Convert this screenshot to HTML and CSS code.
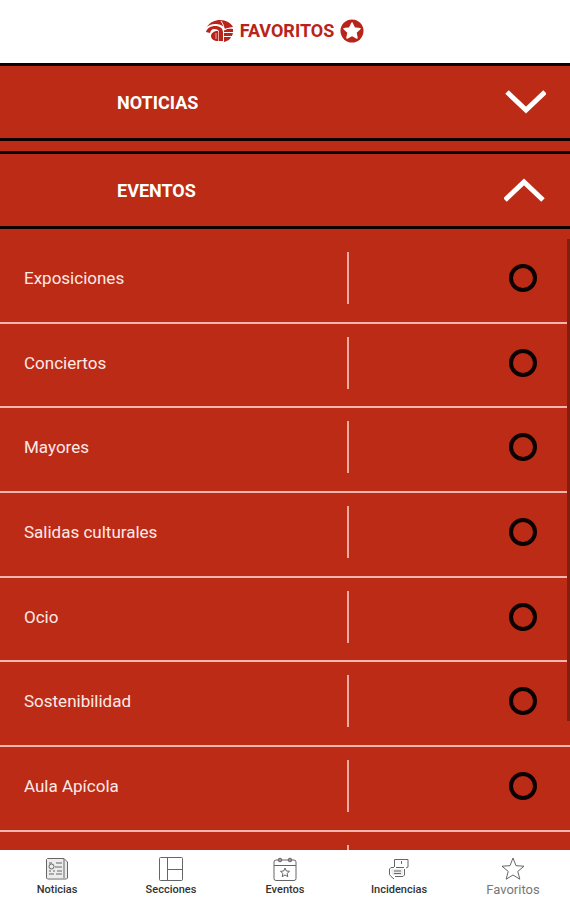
FILE: index.html
```html
<!DOCTYPE html>
<html lang="es">
<head>
<meta charset="utf-8">
<meta name="viewport" content="width=device-width, initial-scale=1">
<title>Favoritos</title>
<link rel="stylesheet" href="styles.css">
</head>
<body>
<header class="topbar">
  <svg class="logo" viewBox="0 0 28 24" aria-hidden="true">
    <path d="M1 8C4 3 9 1 14 1c6 0 11 3 13 7l-8 2C17 6 13 5 9 5 6 5 3 6 1 8z" fill="#b8241a"/>
    <path d="M0 13c1-4 5-6 9-6 5 0 8 2 8 7v8h-4v-9c0-2-2-3-5-3-2 0-3 1-4 4z" fill="#b8241a"/>
    <path d="M12 12v10c-4 0-7-2-7-5s3-5 7-5z" fill="#b8241a"/>
    <path d="M18 11c3-1 6-2 9-1v3h-9zM18 14h9l-1 3h-8zM18 18h7c-1 3-4 4-7 5z" fill="#b8241a"/>
    <path d="M12.500 13v9M10 14v6" fill="none" stroke="#e9aaa4" stroke-width="1"/>
    <path d="M15 2c2 3 3 5 3 9M18 11c3-2 6-2 9-2" fill="none" stroke="#fff" stroke-width="1"/>
  </svg>
  <h1 class="topbar-title">FAVORITOS</h1>
  <svg class="badge" viewBox="0 0 24 24" aria-hidden="true">
    <circle cx="12" cy="12" r="11.5" fill="#b8241a"/>
    <path d="M12 4l2.400 5 5.600.7-4.100 3.800 1.100 5.500-5-2.700L7 19l1.100-5.500L4 9.700 9.600 9z" fill="#fff" stroke="#fff" stroke-width="1.500" stroke-linejoin="round"/>
  </svg>
</header>
<main class="content">
  <button class="section" type="button" aria-expanded="false">
    <span>NOTICIAS</span>
    <svg class="chevron" viewBox="0 0 42 24" aria-hidden="true"><path d="M3 2l19 18L41 2"/></svg>
  </button>
  <button class="section" type="button" aria-expanded="true">
    <span>EVENTOS</span>
    <svg class="chevron" viewBox="0 0 42 24" aria-hidden="true"><path d="M1 22L20 4l19 18"/></svg>
  </button>
  <div class="panel">
    <ul class="options">
      <li><label class="option"><span class="name">Exposiciones</span><input class="check" type="checkbox"></label></li>
      <li><label class="option"><span class="name">Conciertos</span><input class="check" type="checkbox"></label></li>
      <li><label class="option"><span class="name">Mayores</span><input class="check" type="checkbox"></label></li>
      <li><label class="option"><span class="name">Salidas culturales</span><input class="check" type="checkbox"></label></li>
      <li><label class="option"><span class="name">Ocio</span><input class="check" type="checkbox"></label></li>
      <li><label class="option"><span class="name">Sostenibilidad</span><input class="check" type="checkbox"></label></li>
      <li><label class="option"><span class="name">Aula Apícola</span><input class="check" type="checkbox"></label></li>
      <li><div class="option"><span class="name"></span></div></li>
    </ul>
    <div class="scroll-thumb"></div>
  </div>
</main>
<nav class="tabs">
  <a class="tab" href="#noticias">
    <svg viewBox="0 0 24 24" aria-hidden="true"><path class="soft" d="M2 2h17l3 3v16H2z"/><path d="M1.500 2.500l1-1H19l3.500 3.500v16l-1 1h-19l-1-1zM19 2v19"/><path d="M4 6h3M11 6h6M4 14h2M8 14h2M12 14h5M4 17h5M11 17h6M10 10h7"/><circle cx="6.500" cy="9.500" r="2.500"/></svg>
    <span>Noticias</span>
  </a>
  <a class="tab" href="#secciones">
    <svg viewBox="0 0 24 24" aria-hidden="true"><rect x=".5" y=".5" width="23" height="23" rx="1"/><path d="M8.500 1v22M8.500 12.500H23"/></svg>
    <span>Secciones</span>
  </a>
  <a class="tab" href="#eventos">
    <svg viewBox="0 0 24 24" aria-hidden="true"><rect x="1" y="3" width="22" height="20.500" rx="2"/><path d="M1 8.500h22"/><circle class="ring" cx="7" cy="3" r="1.800"/><circle class="ring" cx="17" cy="3" r="1.800"/><path d="M12 11l1.300 3 3.200.3-2.400 2.200.7 3.200L12 18l-2.800 1.700.7-3.200-2.400-2.200 3.200-.3z"/></svg>
    <span>Eventos</span>
  </a>
  <a class="tab" href="#incidencias">
    <svg viewBox="0 0 24 24" aria-hidden="true"><path d="M7.500 10V2.500h13.500v7.500l-2 1M14.500 4v3M9 10.500h8"/><path class="soft" d="M4 12h12v6H5z"/><path d="M7 10.500H4L2.500 12v5.500L4 19.500l3 2.500M7 14h7M7 16.500h7M17.500 12v6L16 19.500H8"/></svg>
    <span>Incidencias</span>
  </a>
  <a class="tab tab-current" href="#favoritos" aria-current="page">
    <svg viewBox="0 0 24 24" aria-hidden="true"><path d="M12 1l3 7.700 8 .5-6.200 5.200 2 7.800L12 18l-6.800 4.200 2-7.800L1 9.200l8-.5z"/></svg>
    <span>Favoritos</span>
  </a>
</nav>
</body>
</html>
```
FILE: styles.css
```css
* { box-sizing: border-box; }

body {
  margin: 0;
  height: 100vh;
  display: flex;
  flex-direction: column;
  background: #fff;
  font-family: Roboto, "Liberation Sans", sans-serif;
}

.topbar {
  flex: none;
  height: 63px;
  padding-bottom: 2px;
  display: flex;
  align-items: center;
  justify-content: center;
  gap: 6px;
}
.topbar-title {
  margin: 0;
  font-size: 18px;
  font-weight: 700;
  color: #b8241a;
}
.logo { width: 28px; height: 24px; }
.badge { width: 24px; height: 24px; }

.content {
  flex: 1;
  min-height: 0;
  display: flex;
  flex-direction: column;
  background: #bb2b16;
}

.section {
  flex: none;
  height: 78px;
  display: flex;
  align-items: center;
  justify-content: space-between;
  padding: 0 24px 0 117px;
  border: solid #0c0000;
  border-width: 3px 0;
  background: #bb2b16;
  color: #fff;
  font: 700 18px Roboto, "Liberation Sans", sans-serif;
}
.section + .section { margin-top: 10px; }
.chevron {
  width: 42px;
  height: 24px;
  fill: none;
  stroke: #fff;
  stroke-width: 5;
}

.panel {
  position: relative;
  flex: 1;
  min-height: 0;
  overflow: hidden;
  padding-top: 10px;
}
.options { margin: 0; padding: 0; list-style: none; }
.option {
  height: 85px;
  display: grid;
  grid-template-columns: 65% 1fr;
  align-items: center;
  padding: 13px 33px 18px 0;
  border-bottom: 2px solid #f4b5ae;
}
li:nth-child(3n + 2) .option { height: 84px; }
.name {
  height: 52px;
  line-height: 52px;
  padding-left: 24px;
  border-right: 2px solid #f0aaa2;
  font-size: 17px;
  color: #ffe9e6;
}
.check {
  appearance: none;
  justify-self: end;
  width: 28px;
  height: 28px;
  margin: 0;
  border: 4px solid #0c0000;
  border-radius: 50%;
}
.check:checked { background: #0c0000; }
.scroll-thumb {
  position: absolute;
  top: 10px;
  right: 0;
  width: 3px;
  height: 482px;
  background: #811e10;
}

.tabs {
  flex: none;
  height: 50px;
  display: grid;
  grid-template-columns: repeat(5, 1fr);
  background: #fff;
}
.tab {
  display: flex;
  flex-direction: column;
  align-items: center;
  gap: 2px;
  padding-top: 7px;
  font-size: 11px;
  line-height: 14px;
  font-weight: 500;
  color: #333;
  text-decoration: none;
}
.tab svg {
  width: 24px;
  height: 24px;
  fill: none;
  stroke: #666;
  stroke-width: 1;
}
.tab .soft { fill: #ececec; stroke: none; }
.tab .ring { fill: #999; }
.tab-current { font-size: 13px; font-weight: 400; color: #777; }
```
